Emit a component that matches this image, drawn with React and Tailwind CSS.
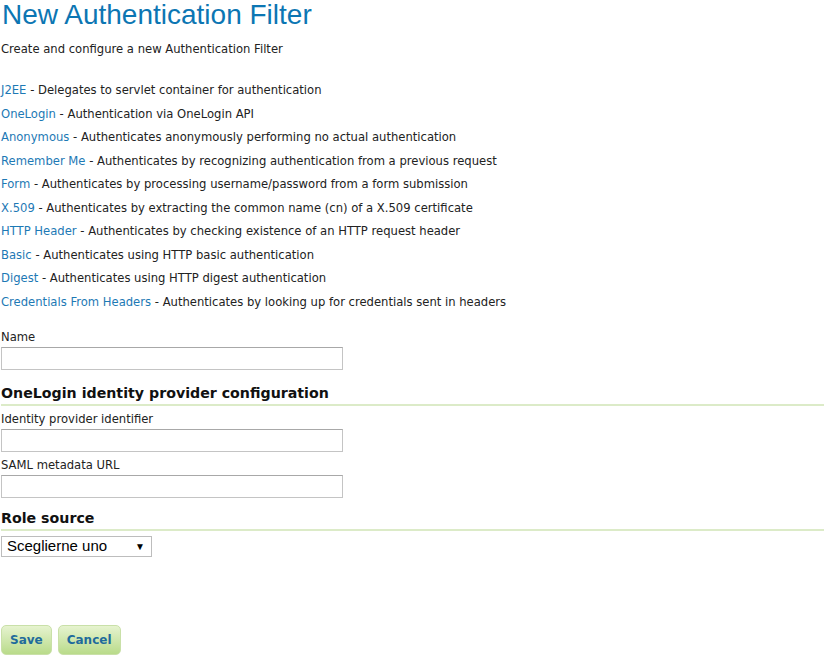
import React from 'react'

const FILTERS = [
  ['J2EE', 'Delegates to servlet container for authentication'],
  ['OneLogin', 'Authentication via OneLogin API'],
  ['Anonymous', 'Authenticates anonymously performing no actual authentication'],
  ['Remember Me', 'Authenticates by recognizing authentication from a previous request'],
  ['Form', 'Authenticates by processing username/password from a form submission'],
  ['X.509', 'Authenticates by extracting the common name (cn) of a X.509 certificate'],
  ['HTTP Header', 'Authenticates by checking existence of an HTTP request header'],
  ['Basic', 'Authenticates using HTTP basic authentication'],
  ['Digest', 'Authenticates using HTTP digest authentication'],
  ['Credentials From Headers', 'Authenticates by looking up for credentials sent in headers'],
]

function Field({ label }) {
  return (
    <div className="flex flex-col">
      <label className="h-[19px] leading-[19px]">{label}</label>
      <input
        type="text"
        className="h-[23px] w-[342px] border border-[#c4c4c4] border-t-[#a8a8a8] bg-white outline-none"
      />
    </div>
  )
}

function SectionTitle({ children }) {
  return (
    <h3 className="border-b-2 border-[#dcebc8] pb-[2px] text-[14.2px] font-bold leading-[18px] text-[#111]">
      {children}
    </h3>
  )
}

function GreenButton({ children }) {
  return (
    <button className="h-[30px] rounded-[5px] border border-[#c9e0a8] bg-gradient-to-b from-[#e6f3cf] to-[#b9db8a] px-[8px] text-[12px] font-bold text-[#1f6b9c]">
      {children}
    </button>
  )
}

export default function App() {
  return (
    <div className="min-h-[655px] bg-white px-[1px] font-['DejaVu_Sans',sans-serif] text-[11.6px] text-[#222]">
      <h1 className="h-[30px] pl-[1px] text-[28px] leading-[30px] font-['Liberation_Sans',sans-serif] text-[#0c76b3]">
        New Authentication Filter
      </h1>
      <p className="mt-[10px] h-[18px] leading-[18px]">Create and configure a new Authentication Filter</p>

      <ul className="mt-[21px] flex flex-col">
        {FILTERS.map(([name, desc]) => (
          <li key={name} className="h-[23.5px] leading-[23.5px]">
            <a href="#" className="text-[#1d79b5]">{name}</a> - {desc}
          </li>
        ))}
      </ul>

      <div className="mt-[14px] flex flex-col">
        <Field label="Name" />
        <div className="mt-[14px]">
          <SectionTitle>OneLogin identity provider configuration</SectionTitle>
        </div>
        <div className="mt-[3.5px] flex flex-col gap-[4px]">
          <Field label="Identity provider identifier" />
          <Field label="SAML metadata URL" />
        </div>
        <div className="mt-[11px]">
          <SectionTitle>Role source</SectionTitle>
        </div>
        <div className="mt-[5px] flex h-[21px] w-[151px] items-center justify-between border border-[#bdbdbd] pl-[5px] pr-[6px] font-['Liberation_Sans',sans-serif] text-[15px] text-black">
          <span>Sceglierne uno</span>
          <span className="text-[10px]">▼</span>
        </div>
      </div>

      <div className="mt-[68px] flex gap-[6px]">
        <GreenButton>Save</GreenButton>
        <GreenButton>Cancel</GreenButton>
      </div>
    </div>
  )
}
